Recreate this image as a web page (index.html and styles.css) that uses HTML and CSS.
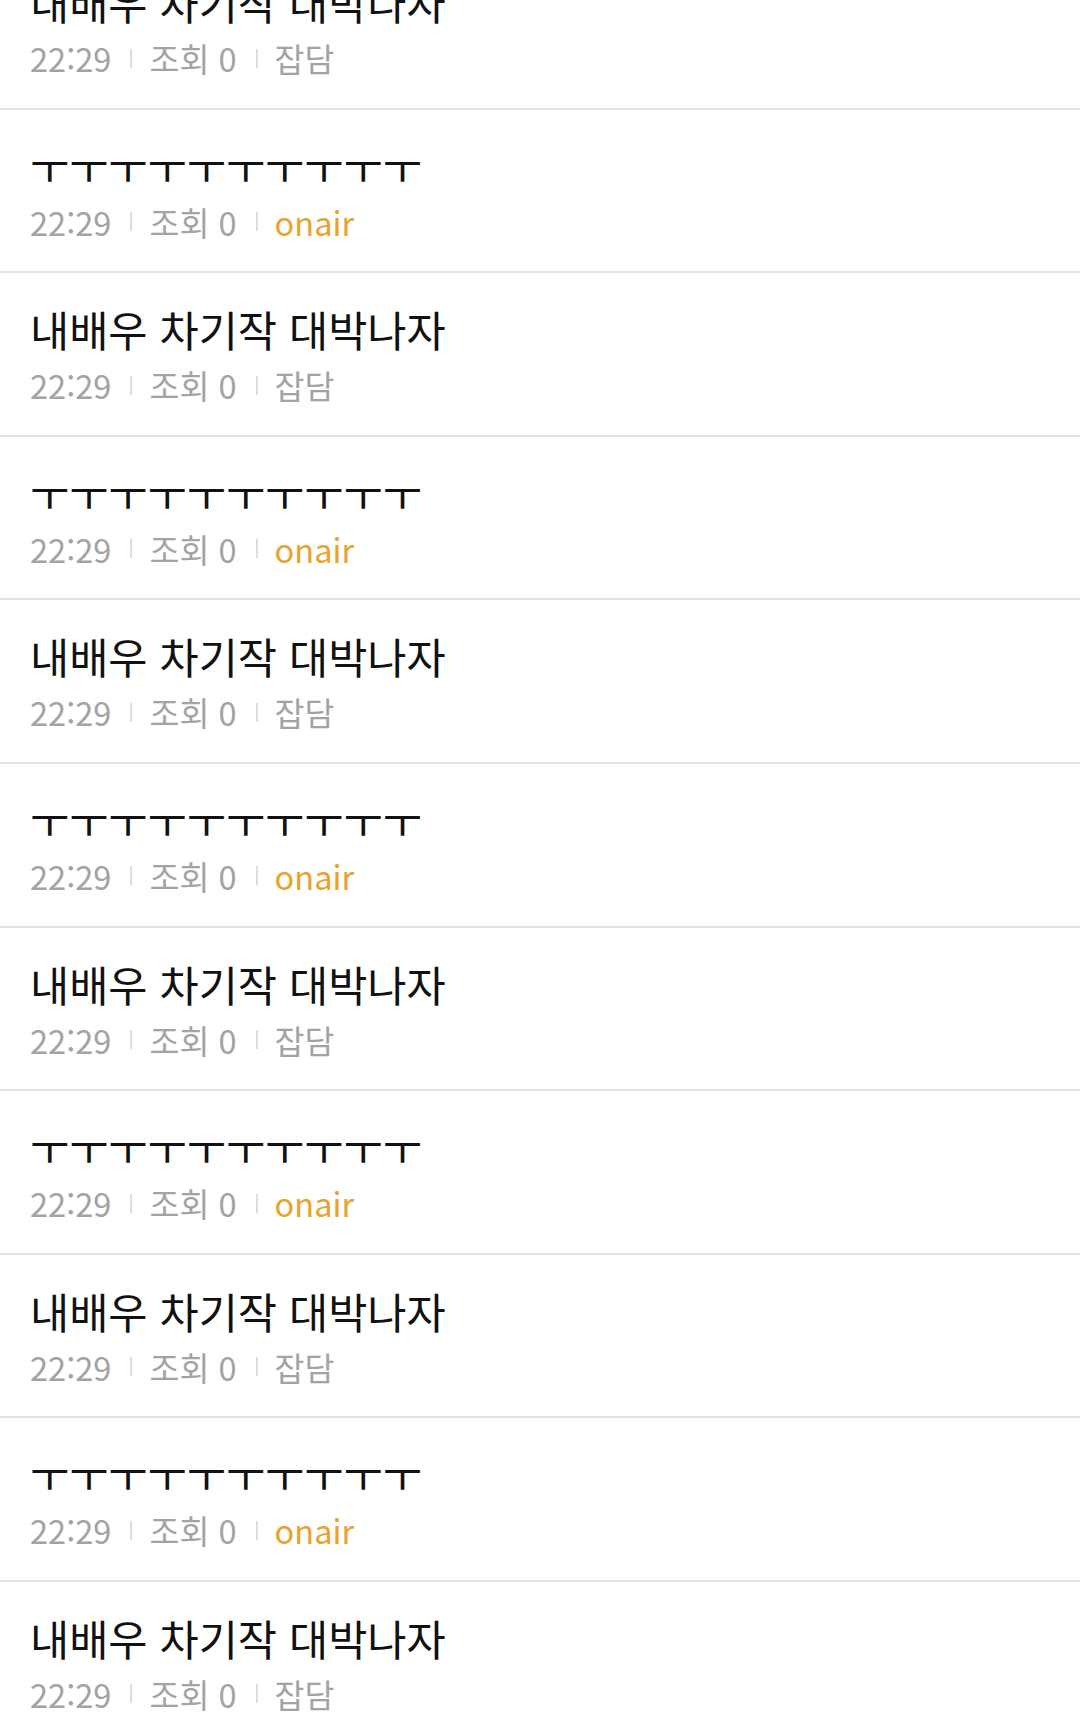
FILE: index.html
```html
<!DOCTYPE html>
<html lang="ko">
<head>
<meta charset="utf-8">
<link rel="stylesheet" href="styles.css">
</head>
<body>
<ul class="list">
  <li class="row"><div class="title">내배우 차기작 대박나자</div><div class="meta"><span>22:29</span><i class="sep"></i><span>조회 0</span><i class="sep"></i><span>잡담</span></div></li>
  <li class="row"><div class="title jamo">ㅜㅜㅜㅜㅜㅜㅜㅜㅜㅜ</div><div class="meta"><span>22:29</span><i class="sep"></i><span>조회 0</span><i class="sep"></i><span class="onair">onair</span></div></li>
  <li class="row"><div class="title">내배우 차기작 대박나자</div><div class="meta"><span>22:29</span><i class="sep"></i><span>조회 0</span><i class="sep"></i><span>잡담</span></div></li>
  <li class="row"><div class="title jamo">ㅜㅜㅜㅜㅜㅜㅜㅜㅜㅜ</div><div class="meta"><span>22:29</span><i class="sep"></i><span>조회 0</span><i class="sep"></i><span class="onair">onair</span></div></li>
  <li class="row"><div class="title">내배우 차기작 대박나자</div><div class="meta"><span>22:29</span><i class="sep"></i><span>조회 0</span><i class="sep"></i><span>잡담</span></div></li>
  <li class="row"><div class="title jamo">ㅜㅜㅜㅜㅜㅜㅜㅜㅜㅜ</div><div class="meta"><span>22:29</span><i class="sep"></i><span>조회 0</span><i class="sep"></i><span class="onair">onair</span></div></li>
  <li class="row"><div class="title">내배우 차기작 대박나자</div><div class="meta"><span>22:29</span><i class="sep"></i><span>조회 0</span><i class="sep"></i><span>잡담</span></div></li>
  <li class="row"><div class="title jamo">ㅜㅜㅜㅜㅜㅜㅜㅜㅜㅜ</div><div class="meta"><span>22:29</span><i class="sep"></i><span>조회 0</span><i class="sep"></i><span class="onair">onair</span></div></li>
  <li class="row"><div class="title">내배우 차기작 대박나자</div><div class="meta"><span>22:29</span><i class="sep"></i><span>조회 0</span><i class="sep"></i><span>잡담</span></div></li>
  <li class="row"><div class="title jamo">ㅜㅜㅜㅜㅜㅜㅜㅜㅜㅜ</div><div class="meta"><span>22:29</span><i class="sep"></i><span>조회 0</span><i class="sep"></i><span class="onair">onair</span></div></li>
  <li class="row"><div class="title">내배우 차기작 대박나자</div><div class="meta"><span>22:29</span><i class="sep"></i><span>조회 0</span><i class="sep"></i><span>잡담</span></div></li>
</ul>
</body>
</html>
```
FILE: styles.css
```css
html, body {
  margin: 0;
  padding: 0;
  background: #ffffff;
  overflow: hidden;
}
body {
  font-family: "Noto Sans CJK KR", "Noto Sans", sans-serif;
}
.list {
  list-style: none;
  margin: -54px 0 0 0;
  padding: 0;
}
.row {
  box-sizing: border-box;
  height: 163.6px;
  border-bottom: 2px solid #e3e3e3;
  padding: 26px 30px 0 30px;
  display: flex;
  flex-direction: column;
}
.title {
  font-size: 42.6px;
  line-height: 60px;
  color: #111111;
  white-space: nowrap;
}
.meta {
  display: flex;
  align-items: center;
  font-size: 32.6px;
  line-height: 46px;
  color: #a3a3a3;
  margin-top: 3px;
}
.sep {
  display: block;
  width: 2px;
  height: 19px;
  background: #dddddd;
  margin: 0 17px 0 19px;
}
.onair {
  color: #e8a32c;
}
```
